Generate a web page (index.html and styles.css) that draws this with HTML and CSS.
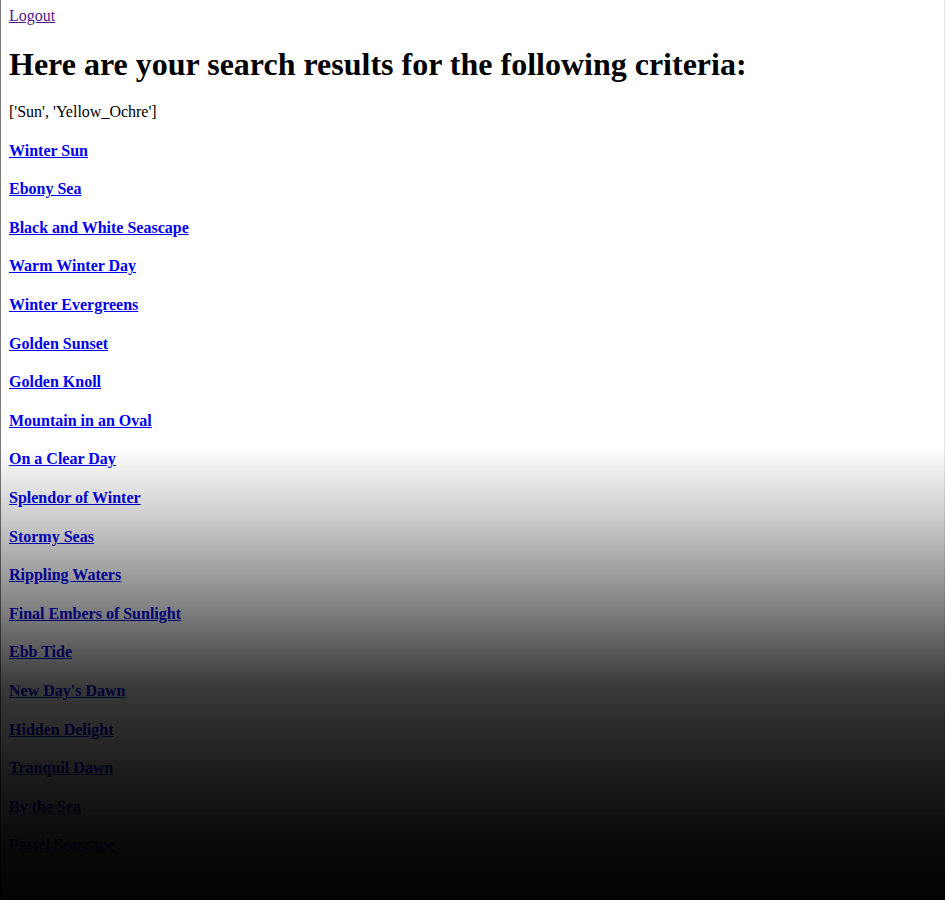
FILE: index.html
```html
<!DOCTYPE html>
<html>
<head>
<meta charset="utf-8">
<title>Search results</title>
<link rel="stylesheet" href="styles.css">
</head>
<body>
<a class="logout" href="#">Logout</a>
<h1 class="title">Here are your search results for the following criteria:</h1>
<p class="criteria">['Sun', 'Yellow_Ochre']</p>
<ul class="results">
<li><a href="#">Winter Sun</a></li>
<li><a href="#">Ebony Sea</a></li>
<li><a href="#">Black and White Seascape</a></li>
<li><a href="#">Warm Winter Day</a></li>
<li><a href="#">Winter Evergreens</a></li>
<li><a href="#">Golden Sunset</a></li>
<li><a href="#">Golden Knoll</a></li>
<li><a href="#">Mountain in an Oval</a></li>
<li><a href="#">On a Clear Day</a></li>
<li><a href="#">Splendor of Winter</a></li>
<li><a href="#">Stormy Seas</a></li>
<li><a href="#">Rippling Waters</a></li>
<li><a href="#">Final Embers of Sunlight</a></li>
<li><a href="#">Ebb Tide</a></li>
<li><a href="#">New Day's Dawn</a></li>
<li><a href="#">Hidden Delight</a></li>
<li><a href="#">Tranquil Dawn</a></li>
<li><a href="#">By the Sea</a></li>
<li><a href="#">Pastel Seascape</a></li>
</ul>
<div class="shade"></div>
</body>
</html>
```
FILE: styles.css
```css
html {
  background: #fff;
  border-left: 1px solid #7a7a7a;
  border-right: 1px solid #e8e8e8;
  min-height: 100%;
  box-sizing: border-box;
}
body {
  margin: 7px 8px 8px 8px;
  font-family: "Liberation Serif", "Times New Roman", serif;
  font-size: 16px;
  color: #000;
}
.logout {
  color: #551a8b;
  display: inline-block;
  line-height: 18px;
}
.title {
  font-size: 32px;
  font-weight: bold;
  margin: 20.5px 0 0 0;
  line-height: 37px;
}
.criteria {
  margin: 20.5px 0 0 0;
  line-height: 18px;
}
.results {
  list-style: none;
  margin: 0;
  padding: 0;
}
.results li {
  margin-top: 20.6px;
  line-height: 18px;
}
.results a {
  color: #0000ee;
  font-weight: bold;
}
.shade {
  position: fixed;
  left: 0;
  right: 0;
  top: 440px;
  height: 460px;
  pointer-events: none;
  background: linear-gradient(to bottom, rgba(0,0,0,0) 1.5%, rgba(0,0,0,0.2) 17%, rgba(0,0,0,0.5) 37%, rgba(0,0,0,0.78) 54%, rgba(0,0,0,0.88) 70%, rgba(0,0,0,0.93) 80%, rgba(0,0,0,0.965) 88.5%, rgba(0,0,0,0.99) 100%);
}
```
